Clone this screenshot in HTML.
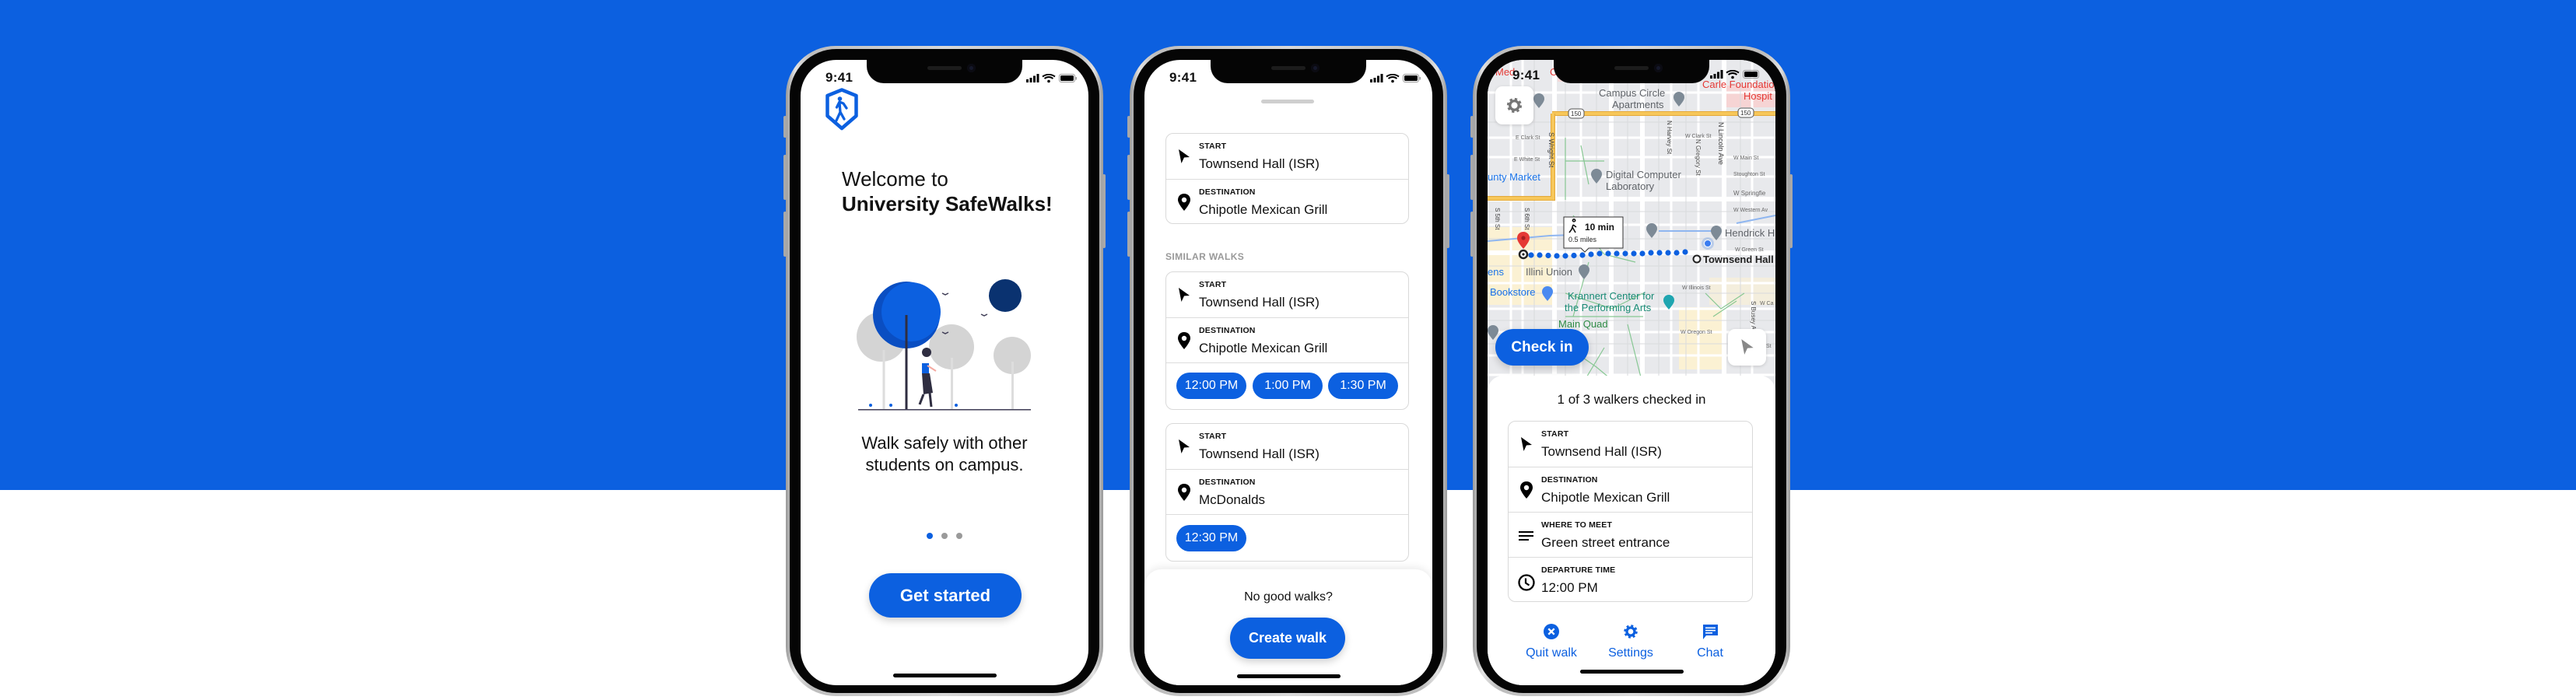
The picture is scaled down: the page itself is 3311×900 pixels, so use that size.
<!DOCTYPE html>
<html><head><meta charset="utf-8">
<style>
*{margin:0;padding:0;box-sizing:border-box}
html,body{width:3311px;height:900px;overflow:hidden;background:#fff;font-family:"Liberation Sans",Arial,sans-serif;color:#111}
.bg{position:absolute;left:0;top:0;width:3311px;height:630px;background:#0c60e0}
.phone{position:absolute;top:59px;width:408px;height:836px;border-radius:64px;background:linear-gradient(90deg,#9a9a9a,#e2e2e2 3%,#bdbdbd 8%,#d8d8d8 50%,#bdbdbd 92%,#e2e2e2 97%,#9a9a9a)}
.phone .blk{position:absolute;left:5px;top:4px;right:5px;bottom:4px;border-radius:60px;background:#050505}
.btnside{position:absolute;width:4px;background:#a8a8a8;border-radius:2px}
.screen{position:absolute;left:19px;top:18px;width:370px;height:804px;border-radius:46px;background:#fff;overflow:hidden}
.notch{position:absolute;left:85px;top:0;width:200px;height:30px;background:#050505;border-radius:0 0 22px 22px;z-index:5}
.notch .spk{position:absolute;left:78px;top:8px;width:44px;height:5px;border-radius:3px;background:#1c1c1c}
.notch .cam{position:absolute;left:129px;top:5px;width:11px;height:11px;border-radius:50%;background:#15182a;box-shadow:inset 0 0 0 3px #0b0b12}
.time{position:absolute;left:32px;top:13px;font-size:17px;font-weight:bold;z-index:6;letter-spacing:.3px}
.stat{position:absolute;left:290px;top:18px;z-index:6}
.home{position:absolute;left:119px;width:133px;height:5px;border-radius:3px;background:#000;z-index:6}
.card{position:absolute;border:1px solid #d9d9d9;border-radius:10px;background:#fff;overflow:hidden}
.row{position:relative;height:58px;border-top:1px solid #dcdcdc}
.row:first-child{border-top:none;height:58px}
.lbl{position:absolute;left:42px;top:10px;font-size:10.5px;font-weight:bold;letter-spacing:.2px}
.val{position:absolute;left:42px;top:29px;font-size:17px;white-space:nowrap}
.ico{position:absolute;left:15px;top:19px}
.pill{position:absolute;height:34px;width:90px;border-radius:17px;background:#0c60e0;color:#fff;font-size:16px;text-align:center;line-height:34px}
.bbtn{position:absolute;background:#0c60e0;color:#fff;font-weight:bold;text-align:center;border-radius:30px;box-shadow:0 4px 10px rgba(0,0,0,.18)}
.tab{position:absolute;top:754px;font-size:16px;color:#0c60e0;width:100px;text-align:center}
</style></head><body>
<div class="bg"></div>

<!-- PHONE 1 -->
<div class="phone" style="left:1010px">
 <div class="btnside" style="left:-3px;top:90px;height:28px"></div>
 <div class="btnside" style="left:-3px;top:140px;height:58px"></div>
 <div class="btnside" style="left:-3px;top:213px;height:58px"></div>
 <div class="btnside" style="right:-3px;top:165px;height:95px"></div>
 <div class="blk"></div>
 <div class="screen">
  <div class="notch"><div class="spk"></div><div class="cam"></div></div>
  <div class="time">9:41</div>
  <svg class="stat" width="66" height="12" viewBox="0 0 66 12"><rect x="0" y="7" width="3" height="4" fill="#000"/><rect x="4.5" y="5" width="3" height="6" fill="#000"/><rect x="9" y="2.5" width="3" height="8.5" fill="#000"/><rect x="13.5" y="0" width="3" height="11" fill="#000"/><path d="M21 3.5 Q29 -2 37 3.5" stroke="#000" stroke-width="2" fill="none"/><path d="M23.5 6 Q29 2 34.5 6" stroke="#000" stroke-width="2" fill="none"/><circle cx="29" cy="9.5" r="1.8" fill="#000"/><rect x="42.5" y="0.5" width="20" height="10" rx="2.5" fill="none" stroke="#999"/><rect x="44" y="2" width="17" height="7" rx="1.5" fill="#000"/><rect x="63.5" y="4" width="1.5" height="3.5" fill="#999"/></svg>
  <svg style="position:absolute;left:32px;top:36px" width="42" height="55" viewBox="0 0 42 55"><path d="M21 2.5 L39.5 10 V36 L21 52 L2.5 36 V10 Z" fill="none" stroke="#0c60e0" stroke-width="4.5" stroke-linejoin="round"/><circle cx="18.5" cy="14" r="2.8" fill="#0c60e0"/><path d="M18 18 L23 20 L27 26 M18 18 L14.5 25 M18 19 L19 31 L14 42 M19 31 L24 40" stroke="#0c60e0" stroke-width="3.3" fill="none" stroke-linecap="round" stroke-linejoin="round"/></svg>
  <div style="position:absolute;left:53px;top:137px;font-size:26px;line-height:32px">Welcome to<br><b>University SafeWalks!</b></div>
  <svg style="position:absolute;left:66px;top:273px" width="240" height="185" viewBox="0 0 240 185">
   <circle cx="38" cy="83" r="32" fill="#d4d4d4"/><rect x="39.5" y="100" width="3" height="77" fill="#ddd"/>
   <circle cx="128" cy="96" r="29" fill="#d4d4d4"/><rect x="127" y="110" width="3" height="67" fill="#ddd"/>
   <circle cx="206" cy="107" r="24" fill="#d4d4d4"/><rect x="205" y="115" width="3" height="62" fill="#ddd"/>
   <circle cx="197" cy="30" r="21" fill="#0a3270"/>
   <circle cx="70" cy="55" r="43" fill="#0a4ec2"/><circle cx="76" cy="51" r="38" fill="#0c60e0"/>
   <rect x="68.5" y="55" width="3" height="122" fill="#2f2e41"/>
   <circle cx="96" cy="103" r="6" fill="#2f2e41"/><rect x="90" y="117" width="9" height="13" fill="#0c60e0"/>
   <path d="M90 130 L100 130 L104 155 L92 157 Z" fill="#2f2e41"/><path d="M92 157 L87 170 M100 155 L102 173" stroke="#2f2e41" stroke-width="3"/>
   <path d="M97 120 L108 127" stroke="#f4a9a0" stroke-width="2"/>
   <path d="M116 27 l4 2 l4 -2 M166 54 l4 2 l4 -2 M116 77 l4 2 l4 -2" stroke="#3f3d56" stroke-width="1.5" fill="none"/>
   <rect x="8" y="176" width="222" height="1.5" fill="#3f3d56"/>
   <circle cx="24" cy="171" r="2" fill="#0c60e0"/><circle cx="50" cy="171" r="2" fill="#0c60e0"/><circle cx="134" cy="171" r="2" fill="#0c60e0"/>
  </svg>
  <div style="position:absolute;left:0;width:370px;top:479px;font-size:22px;line-height:28px;text-align:center">Walk safely with other<br>students on campus.</div>
  <div style="position:absolute;left:162px;top:608px;width:8px;height:8px;border-radius:50%;background:#0c60e0"></div>
  <div style="position:absolute;left:181px;top:608px;width:8px;height:8px;border-radius:50%;background:#9a9a9a"></div>
  <div style="position:absolute;left:200px;top:608px;width:8px;height:8px;border-radius:50%;background:#9a9a9a"></div>
  <div class="bbtn" style="left:88px;top:660px;width:196px;height:57px;line-height:57px;font-size:22px">Get started</div>
  <div class="home" style="top:789px"></div>
 </div>
</div>

<!-- PHONE 2 -->
<div class="phone" style="left:1452px">
 <div class="btnside" style="left:-3px;top:90px;height:28px"></div>
 <div class="btnside" style="left:-3px;top:140px;height:58px"></div>
 <div class="btnside" style="left:-3px;top:213px;height:58px"></div>
 <div class="btnside" style="right:-3px;top:165px;height:95px"></div>
 <div class="blk"></div>
 <div class="screen">
  <div class="notch"><div class="spk"></div><div class="cam"></div></div>
  <div class="time">9:41</div>
  <svg class="stat" width="66" height="12" viewBox="0 0 66 12"><rect x="0" y="7" width="3" height="4" fill="#000"/><rect x="4.5" y="5" width="3" height="6" fill="#000"/><rect x="9" y="2.5" width="3" height="8.5" fill="#000"/><rect x="13.5" y="0" width="3" height="11" fill="#000"/><path d="M21 3.5 Q29 -2 37 3.5" stroke="#000" stroke-width="2" fill="none"/><path d="M23.5 6 Q29 2 34.5 6" stroke="#000" stroke-width="2" fill="none"/><circle cx="29" cy="9.5" r="1.8" fill="#000"/><rect x="42.5" y="0.5" width="20" height="10" rx="2.5" fill="none" stroke="#999"/><rect x="44" y="2" width="17" height="7" rx="1.5" fill="#000"/><rect x="63.5" y="4" width="1.5" height="3.5" fill="#999"/></svg>
  <div style="position:absolute;left:150px;top:51px;width:68px;height:5px;border-radius:3px;background:#cfcfcf"></div>

  <div class="card" style="left:27px;top:94px;width:313px;height:117px">
   <div class="row"><svg class="ico" width="16" height="20" viewBox="0 0 16 20"><path d="M1 1 L15 11 L8 11.5 L4.5 19 Z" fill="#000"/></svg><div class="lbl">START</div><div class="val">Townsend Hall (ISR)</div></div>
   <div class="row"><svg class="ico" style="left:14px;top:17px" width="18" height="24" viewBox="0 0 18 24"><path d="M9 1 C4 1 1 4.5 1 9 C1 14 9 23 9 23 C9 23 17 14 17 9 C17 4.5 14 1 9 1 Z" fill="#000"/><circle cx="9" cy="9" r="3.2" fill="#fff"/></svg><div class="lbl">DESTINATION</div><div class="val">Chipotle Mexican Grill</div></div>
  </div>

  <div style="position:absolute;left:27px;top:246px;font-size:12px;font-weight:bold;color:#999;letter-spacing:.4px">SIMILAR WALKS</div>

  <div class="card" style="left:27px;top:272px;width:313px;height:178px">
   <div class="row"><svg class="ico" width="16" height="20" viewBox="0 0 16 20"><path d="M1 1 L15 11 L8 11.5 L4.5 19 Z" fill="#000"/></svg><div class="lbl">START</div><div class="val">Townsend Hall (ISR)</div></div>
   <div class="row"><svg class="ico" style="left:14px;top:17px" width="18" height="24" viewBox="0 0 18 24"><path d="M9 1 C4 1 1 4.5 1 9 C1 14 9 23 9 23 C9 23 17 14 17 9 C17 4.5 14 1 9 1 Z" fill="#000"/><circle cx="9" cy="9" r="3.2" fill="#fff"/></svg><div class="lbl">DESTINATION</div><div class="val">Chipotle Mexican Grill</div></div>
   <div class="row" style="height:62px"><div class="pill" style="left:13px;top:12px">12:00 PM</div><div class="pill" style="left:111px;top:12px">1:00 PM</div><div class="pill" style="left:208px;top:12px">1:30 PM</div></div>
  </div>

  <div class="card" style="left:27px;top:467px;width:313px;height:178px">
   <div class="row"><svg class="ico" width="16" height="20" viewBox="0 0 16 20"><path d="M1 1 L15 11 L8 11.5 L4.5 19 Z" fill="#000"/></svg><div class="lbl">START</div><div class="val">Townsend Hall (ISR)</div></div>
   <div class="row"><svg class="ico" style="left:14px;top:17px" width="18" height="24" viewBox="0 0 18 24"><path d="M9 1 C4 1 1 4.5 1 9 C1 14 9 23 9 23 C9 23 17 14 17 9 C17 4.5 14 1 9 1 Z" fill="#000"/><circle cx="9" cy="9" r="3.2" fill="#fff"/></svg><div class="lbl">DESTINATION</div><div class="val">McDonalds</div></div>
   <div class="row" style="height:62px"><div class="pill" style="left:13px;top:13px">12:30 PM</div></div>
  </div>

  <div style="position:absolute;left:0;top:655px;width:370px;height:160px;background:#fff;border-radius:22px 22px 0 0;box-shadow:0 -3px 10px rgba(0,0,0,.08)"></div>
  <div style="position:absolute;left:0;width:370px;top:682px;text-align:center;font-size:16px">No good walks?</div>
  <div class="bbtn" style="left:110px;top:717px;width:148px;height:53px;line-height:53px;font-size:18px">Create walk</div>
  <div class="home" style="top:790px"></div>
 </div>
</div>

<!-- PHONE 3 -->
<div class="phone" style="left:1893px">
 <div class="btnside" style="left:-3px;top:90px;height:28px"></div>
 <div class="btnside" style="left:-3px;top:140px;height:58px"></div>
 <div class="btnside" style="left:-3px;top:213px;height:58px"></div>
 <div class="btnside" style="right:-3px;top:165px;height:95px"></div>
 <div class="blk"></div>
 <div class="screen">
  <svg style="position:absolute;left:0;top:0" width="370" height="430" viewBox="0 0 370 430" font-family="Liberation Sans, Arial, sans-serif">
   <rect width="370" height="430" fill="#e8e9ec"/>
   <rect x="90" y="0" width="105" height="28" fill="#f3d9d9"/>
   <rect x="305" y="33" width="65" height="28" fill="#f6d4d4"/>
   <rect x="0" y="215" width="86" height="100" fill="#fbf1d3"/>
   <rect x="246" y="318" width="60" height="80" fill="#fbf1d3"/>
   <rect x="285" y="280" width="85" height="35" fill="#fbf1d3" opacity=".6"/>
   <g stroke="#fff" stroke-width="3" fill="none">
    <path d="M0 42 H370 M0 100 H370 M0 125 H370 M0 150 H370 M0 212 H370 M0 287 H370 M0 320 H370 M0 350 H370 M0 380 H370 M0 405 H370"/>
    <path d="M45 0 V430 M120 0 V430 M236 0 V430 M271 0 V430 M340 0 V430 M30 0 V430"/>
   </g>
   <g stroke="#fff" stroke-width="6" fill="none">
    <path d="M0 179 H370 M0 248 H370 M159 0 V430 M199 0 V430 M304 0 V430 M86 0 V430"/>
   </g>
   <g stroke="#d9dadd" stroke-width="1" fill="none">
    <path d="M0 80 H370 M0 195 H370 M0 230 H370 M0 265 H370 M0 300 H370 M0 335 H370 M0 365 H370 M60 0 V430 M140 0 V430 M180 0 V430 M220 0 V430 M255 0 V430 M325 0 V430 M100 0 V430"/>
   </g>
   <g stroke="#7cc38a" stroke-width="1.2" fill="none" opacity=".9">
    <path d="M100 100 V180 M120 110 L130 160 M100 130 H150 M110 200 L150 250 L190 260 M130 260 L110 330 M100 300 L160 320 L200 300 M90 360 L140 395 L170 420 M150 370 L120 420 M280 300 L300 320 L330 300 M290 330 L320 310 M100 330 H200 M180 340 L200 420"/>
   </g>
   <path d="M83 69 H370" stroke="#e3a93a" stroke-width="6"/><path d="M83 69 H370" stroke="#f7c75a" stroke-width="4"/>
   <path d="M84 69 V178 H0" stroke="#e3a93a" stroke-width="6" fill="none"/><path d="M84 69 V178 H0" stroke="#f7c75a" stroke-width="4" fill="none"/>
   <path d="M0 233 L80 226 L110 225" stroke="#8fb6f0" stroke-width="2" fill="none"/>
   <path d="M220 220 H300 M320 210 L370 200" stroke="#8fb6f0" stroke-width="2" fill="none"/>
   <g fill="#fff" stroke="#555" stroke-width="1"><rect x="104" y="63" width="20" height="12" rx="4"/><rect x="322" y="62" width="20" height="12" rx="4"/></g>
   <g font-size="8" fill="#333"><text x="107" y="72">150</text><text x="325" y="71">150</text></g>
   <g fill="#0c60e0">
    <circle cx="56" cy="251" r="3.6"/><circle cx="67" cy="251" r="3.6"/><circle cx="78" cy="251.5" r="3.6"/><circle cx="89" cy="252" r="3.6"/><circle cx="100" cy="252" r="3.6"/><circle cx="111" cy="251.5" r="3.6"/><circle cx="122" cy="251" r="3.6"/><circle cx="133" cy="250" r="3.6"/><circle cx="144" cy="249" r="3.6"/><circle cx="155" cy="249" r="3.6"/><circle cx="166" cy="249" r="3.6"/><circle cx="177" cy="249" r="3.6"/><circle cx="188" cy="249" r="3.6"/><circle cx="199" cy="249" r="3.6"/><circle cx="210" cy="248" r="3.6"/><circle cx="221" cy="248" r="3.6"/><circle cx="232" cy="248" r="3.6"/><circle cx="243" cy="248" r="3.6"/><circle cx="254" cy="247" r="3.6"/>
   </g>
   <circle cx="283" cy="236" r="8" fill="#0c60e0" opacity=".2"/><circle cx="283" cy="236" r="4.5" fill="#3a7cf0" stroke="#fff" stroke-width="1"/>
   <circle cx="46" cy="250" r="5" fill="#fff" stroke="#222" stroke-width="2.5"/><circle cx="46" cy="250" r="1.6" fill="#222"/>
   <path d="M46 243 C40 236 38 232 38 229 C38 224 42 221 46 221 C50 221 54 224 54 229 C54 232 52 236 46 243 Z" fill="#e53935"/><circle cx="46" cy="229" r="2.6" fill="#a52020"/>
   <circle cx="269" cy="256" r="4.5" fill="#fff" stroke="#222" stroke-width="2"/>
   <text x="277" y="261" font-size="13" font-weight="bold" fill="#222">Townsend Hall</text>
   <g fill="#7d8a96">
    <path d="M66 62 c-5 -6 -7 -9 -7 -12 a7 7 0 0 1 14 0 c0 3 -2 6 -7 12z"/><path d="M246 60 c-5 -6 -7 -9 -7 -12 a7 7 0 0 1 14 0 c0 3 -2 6 -7 12z"/>
    <path d="M140 159 c-5 -6 -7 -9 -7 -12 a7 7 0 0 1 14 0 c0 3 -2 6 -7 12z"/><path d="M211 229 c-5 -6 -7 -9 -7 -12 a7 7 0 0 1 14 0 c0 3 -2 6 -7 12z"/>
    <path d="M294 232 c-5 -6 -7 -9 -7 -12 a7 7 0 0 1 14 0 c0 3 -2 6 -7 12z"/><path d="M124 282 c-5 -6 -7 -9 -7 -12 a7 7 0 0 1 14 0 c0 3 -2 6 -7 12z"/>
    <path d="M7 360 c-5 -6 -7 -9 -7 -12 a7 7 0 0 1 14 0 c0 3 -2 6 -7 12z"/>
   </g>
   <path d="M77 310 c-5 -6 -7 -9 -7 -12 a7 7 0 0 1 14 0 c0 3 -2 6 -7 12z" fill="#4a8af0"/>
   <path d="M233 321 c-5 -6 -7 -9 -7 -12 a7 7 0 0 1 14 0 c0 3 -2 6 -7 12z" fill="#1fa5b0"/>
   <g font-size="13" fill="#5f6368"><text x="143" y="47">Campus Circle</text><text x="160" y="62">Apartments</text><text x="152" y="152">Digital Computer</text><text x="152" y="167">Laboratory</text><text x="49" y="277">Illini Union</text><text x="305" y="227">Hendrick H</text></g>
   <g font-size="13" fill="#1a73e8"><text x="0" y="155">unty Market</text><text x="3" y="303">Bookstore</text><text x="0" y="277">ens</text></g>
   <g font-size="13" fill="#178a74"><text x="103" y="308">Krannert Center for</text><text x="99" y="323">the Performing Arts</text></g>
   <text x="91" y="344" font-size="13" fill="#2f8c46">Main Quad</text>
   <g font-size="13" fill="#e53935"><text x="276" y="36">Carle Foundatio</text><text x="329" y="51">Hospit</text><text x="10" y="20">Med</text><text x="80" y="20">Cent</text></g>
   <g font-size="7" fill="#666"><text x="36" y="102">E Clark St</text><text x="34" y="130">E White St</text><text x="254" y="100">W Clark St</text><text x="316" y="128">W Main St</text><text x="316" y="149">Stoughton St</text><text x="316" y="174" font-size="8">W Springfie</text><text x="316" y="195">W Western Av</text><text x="318" y="246">W Green St</text><text x="250" y="295">W Illinois St</text><text x="248" y="352">W Oregon St</text><text x="350" y="315">W Ca</text><text x="358" y="370">St</text></g>
   <g font-size="8" fill="#444"><text transform="translate(79,93) rotate(90)" font-size="9">S Wright St</text><text transform="translate(297,80) rotate(90)" font-size="9">N Lincoln Ave</text><text transform="translate(231,78) rotate(90)">N Harvey St</text><text transform="translate(268,102) rotate(90)">N Gregory St</text><text transform="translate(10,190) rotate(90)">S 5th St</text><text transform="translate(48,190) rotate(90)">S 6th St</text><text transform="translate(339,310) rotate(90)">S Busey Av</text></g>
   <path d="M98 202 H174 V242 H130 L125 247 L120 242 H98 Z" fill="#fff" stroke="#333" stroke-width="1"/>
   <text x="125" y="219" font-size="12" font-weight="bold" fill="#111">10 min</text>
   <text x="104" y="234" font-size="9" fill="#222">0.5 miles</text>
   <path d="M111 208 a1.6 1.6 0 1 1 0.1 0 M110 212 L108 218 L105 222 M109 215 L113 222 M110 212 L114 215" stroke="#111" stroke-width="1.6" fill="none"/>
  </svg>
  <div class="notch"><div class="spk"></div><div class="cam"></div></div>
  <div class="time" style="top:10px">9:41</div>
  <svg class="stat" style="top:13px;left:286px" width="66" height="12" viewBox="0 0 66 12"><rect x="0" y="7" width="3" height="4" fill="#000"/><rect x="4.5" y="5" width="3" height="6" fill="#000"/><rect x="9" y="2.5" width="3" height="8.5" fill="#000"/><rect x="13.5" y="0" width="3" height="11" fill="#000"/><path d="M21 3.5 Q29 -2 37 3.5" stroke="#000" stroke-width="2" fill="none"/><path d="M23.5 6 Q29 2 34.5 6" stroke="#000" stroke-width="2" fill="none"/><circle cx="29" cy="9.5" r="1.8" fill="#000"/><rect x="42.5" y="0.5" width="20" height="10" rx="2.5" fill="none" stroke="#999"/><rect x="44" y="2" width="17" height="7" rx="1.5" fill="#000"/></svg>
  <div style="position:absolute;left:10px;top:34px;width:49px;height:49px;border-radius:9px;background:#fff;box-shadow:0 1px 4px rgba(0,0,0,.15)">
   <svg style="position:absolute;left:13px;top:13px" width="23" height="23" viewBox="0 0 24 24"><circle cx="12" cy="12" r="8" fill="none" stroke="#757575" stroke-width="4" stroke-dasharray="3.2 3.1"/><circle cx="12" cy="12" r="6" fill="none" stroke="#757575" stroke-width="3.5"/></svg>
  </div>
  <div class="bbtn" style="left:10px;top:346px;width:120px;height:47px;line-height:47px;font-size:19px">Check in</div>
  <div style="position:absolute;left:309px;top:346px;width:49px;height:47px;border-radius:9px;background:#fff;box-shadow:0 1px 4px rgba(0,0,0,.15)">
   <svg style="position:absolute;left:14px;top:12px" width="22" height="22" viewBox="0 0 16 20"><path d="M1 1 L15 11 L8 11.5 L4.5 19 Z" fill="#888"/></svg>
  </div>
  <div style="position:absolute;left:0;top:406px;width:370px;height:400px;background:#fff;border-radius:20px 20px 0 0"></div>
  <div style="position:absolute;left:0;width:370px;top:427px;text-align:center;font-size:17px">1 of 3 walkers checked in</div>
  <div class="card" style="left:26px;top:464px;width:315px;height:233px">
   <div class="row"><svg class="ico" width="16" height="20" viewBox="0 0 16 20"><path d="M1 1 L15 11 L8 11.5 L4.5 19 Z" fill="#000"/></svg><div class="lbl">START</div><div class="val">Townsend Hall (ISR)</div></div>
   <div class="row"><svg class="ico" style="left:14px;top:17px" width="18" height="24" viewBox="0 0 18 24"><path d="M9 1 C4 1 1 4.5 1 9 C1 14 9 23 9 23 C9 23 17 14 17 9 C17 4.5 14 1 9 1 Z" fill="#000"/><circle cx="9" cy="9" r="3.2" fill="#fff"/></svg><div class="lbl">DESTINATION</div><div class="val">Chipotle Mexican Grill</div></div>
   <div class="row"><svg class="ico" style="left:13px;top:23px" width="20" height="14" viewBox="0 0 20 14"><rect x="0" y="1" width="19" height="2" fill="#000"/><rect x="0" y="6" width="19" height="2" fill="#000"/><rect x="0" y="11" width="13" height="2" fill="#000"/></svg><div class="lbl">WHERE TO MEET</div><div class="val">Green street entrance</div></div>
   <div class="row"><svg class="ico" style="left:11px;top:20px" width="24" height="24" viewBox="0 0 24 24"><circle cx="12" cy="12" r="9.5" fill="none" stroke="#000" stroke-width="2.3"/><path d="M11 6.5 V12.5 L15.5 15.5" stroke="#000" stroke-width="2.2" fill="none"/></svg><div class="lbl">DEPARTURE TIME</div><div class="val">12:00 PM</div></div>
  </div>
  <svg style="position:absolute;left:72px;top:725px" width="20" height="20" viewBox="0 0 20 20"><circle cx="10" cy="10" r="10" fill="#0c60e0"/><path d="M6.3 6.3 L13.7 13.7 M13.7 6.3 L6.3 13.7" stroke="#fff" stroke-width="2.4"/></svg>
  <svg style="position:absolute;left:174px;top:725px" width="20" height="20" viewBox="0 0 24 24"><circle cx="12" cy="12" r="8.5" fill="none" stroke="#0c60e0" stroke-width="4" stroke-dasharray="3.3 3.4"/><circle cx="12" cy="12" r="6" fill="none" stroke="#0c60e0" stroke-width="4"/></svg>
  <svg style="position:absolute;left:276px;top:725px" width="21" height="21" viewBox="0 0 21 21"><path d="M1 1 H20 V15 H5 L1 20 Z" fill="#0c60e0"/><rect x="4" y="4.5" width="13" height="1.6" fill="#fff"/><rect x="4" y="7.8" width="13" height="1.6" fill="#fff"/><rect x="4" y="11" width="9" height="1.6" fill="#fff"/></svg>
  <div class="tab" style="left:32px">Quit walk</div>
  <div class="tab" style="left:134px">Settings</div>
  <div class="tab" style="left:236px">Chat</div>
  <div class="home" style="top:784px"></div>
 </div>
</div>
</body></html>
